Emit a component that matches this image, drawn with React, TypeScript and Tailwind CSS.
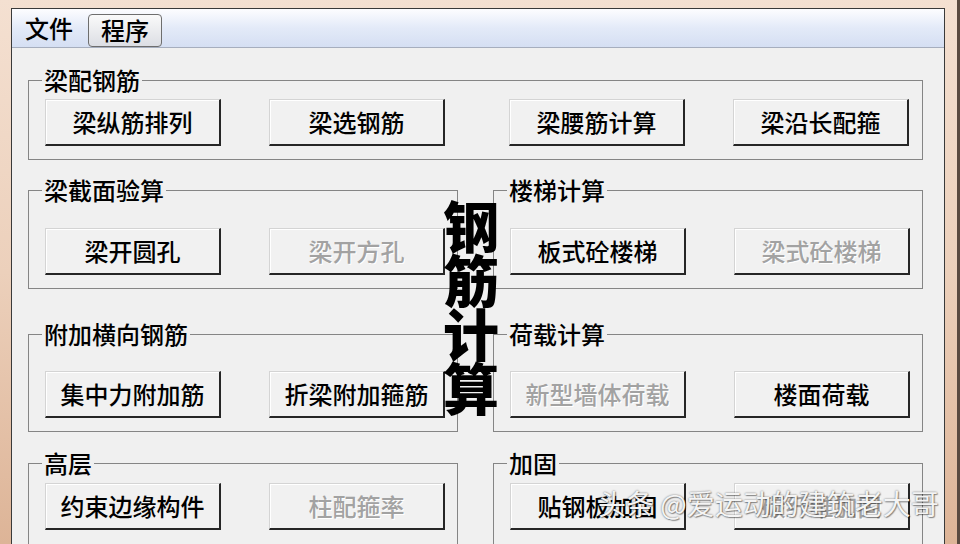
import type { FC, ReactNode } from 'react'

const font = "font-['Noto_Sans_CJK_SC','Noto_Sans',sans-serif]"

const Btn: FC<{ label: string; disabled?: boolean }> = ({ label, disabled }) => (
    <div
        className={
            'w-[176px] h-[47px] shrink-0 flex items-center justify-center bg-[#f1f1f1] border-t border-l border-t-[#d4d4d4] border-l-[#d4d4d4] border-r-2 border-b-2 border-r-[#262626] border-b-[#262626] shadow-[inset_1px_1px_0_#ffffff] text-[24px] leading-none font-medium ' +
            (disabled ? 'text-[#a2a2a2] [text-shadow:1px_1px_0_#ffffff]' : 'text-black')
        }
    >
        {label}
    </div>
)

const Group: FC<{ title: string; className?: string; children: ReactNode }> = ({ title, className, children }) => (
    <fieldset className={'border border-[#858585] min-w-0 ' + (className ?? '')}>
        <legend className="ml-[13px] px-[2px] text-[24px] leading-[24px] font-medium text-black">{title}</legend>
        {children}
    </fieldset>
)

const Pair: FC<{ a: [string, boolean?]; b: [string, boolean?] }> = ({ a, b }) => (
    <div className="flex pl-[16px] gap-[48px]">
        <Btn label={a[0]} disabled={a[1]} />
        <Btn label={b[0]} disabled={b[1]} />
    </div>
)

const App: FC = () => {
    return (
        <div className={'w-[960px] h-[544px] overflow-hidden bg-gradient-to-b from-[#f4e0d1] via-[#ecd0bb] to-[#ddb497] pt-[8px] pl-[11px] border-r-[3px] border-r-[#5a4a40] ' + font}>
            <div className="relative w-[934px] h-[540px] border border-[#3a3a3a] bg-[#f0f0f0]">
                {/* menu bar */}
                <div className="h-[39px] flex items-center gap-[15px] pl-[13px] bg-gradient-to-b from-[#fdfdff] via-[#e3eaf8] to-[#d5dff3] border-b border-[#a6aebe] text-[24px] leading-none font-medium text-black">
                    <span>文件</span>
                    <span className="h-[33px] mt-[4px] px-[12px] flex items-center rounded-[4px] border border-[#6e6e6e] bg-gradient-to-b from-[#fafafa] to-[#dcdee4]">
                        程序
                    </span>
                </div>

                <div className="px-[16px] pt-[20px] flex flex-col">
                    <Group title="梁配钢筋" className="w-[895px] pb-[13px]">
                        <div className="mt-[7px] grid grid-cols-[429px_429px] gap-x-[35px]">
                            <Pair a={['梁纵筋排列']} b={['梁选钢筋']} />
                            <Pair a={['梁腰筋计算']} b={['梁沿长配箍']} />
                        </div>
                    </Group>

                    <div className="mt-[18px] grid grid-cols-[430px_430px] gap-x-[35px]">
                        <Group title="梁截面验算" className="pb-[13px]">
                            <div className="mt-[26px]"><Pair a={['梁开圆孔']} b={['梁开方孔', true]} /></div>
                        </Group>
                        <Group title="楼梯计算" className="pb-[13px]">
                            <div className="mt-[26px]"><Pair a={['板式砼楼梯']} b={['梁式砼楼梯', true]} /></div>
                        </Group>
                    </div>

                    <div className="mt-[33px] grid grid-cols-[430px_430px] gap-x-[35px]">
                        <Group title="附加横向钢筋" className="pb-[13px]">
                            <div className="mt-[25px]"><Pair a={['集中力附加筋']} b={['折梁附加箍筋']} /></div>
                        </Group>
                        <Group title="荷载计算" className="pb-[13px]">
                            <div className="mt-[25px]"><Pair a={['新型墙体荷载', true]} b={['楼面荷载']} /></div>
                        </Group>
                    </div>

                    <div className="mt-[19px] grid grid-cols-[430px_430px] gap-x-[35px]">
                        <Group title="高层" className="pb-[40px]">
                            <div className="mt-[8px]"><Pair a={['约束边缘构件']} b={['柱配箍率', true]} /></div>
                        </Group>
                        <Group title="加固" className="pb-[40px]">
                            <div className="mt-[8px]"><Pair a={['贴钢板加固']} b={['碳纤维加固', true]} /></div>
                        </Group>
                    </div>
                </div>

                {/* vertical title over the panels */}
                <div className="absolute left-[431px] top-[188px] w-[56px] flex flex-col items-center text-[56px] leading-[54px] font-black text-black">
                    <span>钢</span>
                    <span>筋</span>
                    <span>计</span>
                    <span>算</span>
                </div>

                {/* watermark */}
                <div className="absolute left-[586px] top-[476px] text-[28px] leading-[36px] text-[#f4f4f4] [text-shadow:0_0_2px_rgba(0,0,0,0.55),1px_1px_1px_rgba(0,0,0,0.35)] whitespace-nowrap">
                    头条 @爱运动的建筑老大哥
                </div>
            </div>
        </div>
    )
}

export default App
